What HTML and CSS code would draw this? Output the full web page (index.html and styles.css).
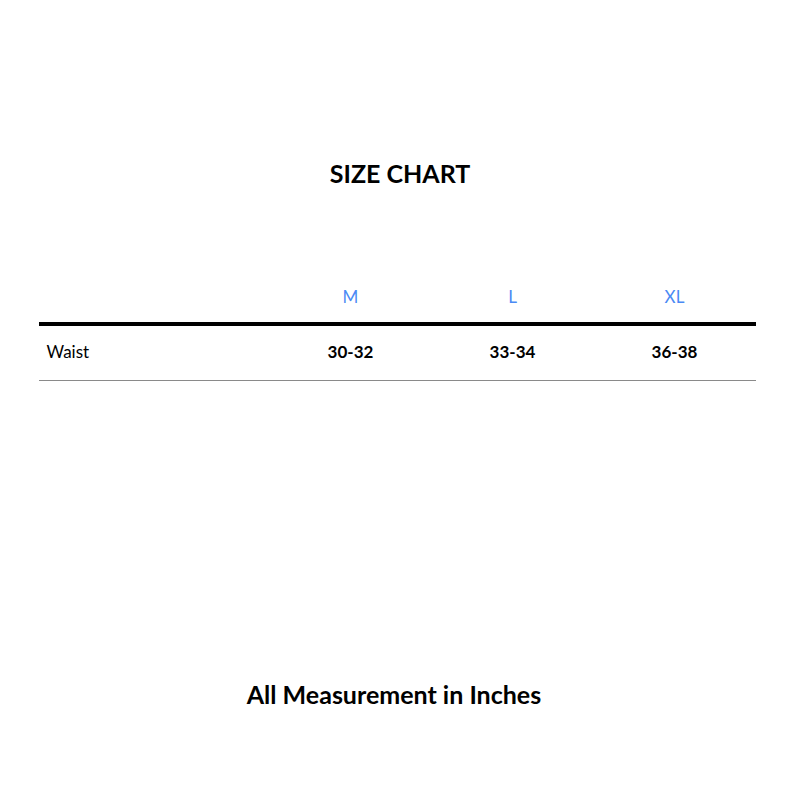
FILE: index.html
```html
<!DOCTYPE html>
<html>
<head>
<meta charset="utf-8">
<link rel="stylesheet" href="styles.css">
</head>
<body>
<div class="page">
  <h1 class="title">SIZE CHART</h1>
  <div class="chart">
    <div class="row head">
      <div class="cell label"></div>
      <div class="cell size">M</div>
      <div class="cell size">L</div>
      <div class="cell size">XL</div>
    </div>
    <div class="row body">
      <div class="cell label">Waist</div>
      <div class="cell val">30-32</div>
      <div class="cell val">33-34</div>
      <div class="cell val">36-38</div>
    </div>
  </div>
  <p class="note">All Measurement in Inches</p>
</div>
</body>
</html>
```
FILE: styles.css
```css
html, body {
  margin: 0;
  padding: 0;
  background: #fff;
}
body {
  font-family: Lato, "Open Sans", "Liberation Sans", sans-serif;
  color: #000;
}
.page {
  width: 800px;
  height: 800px;
  display: flex;
  flex-direction: column;
  align-items: center;
}
.title {
  margin: 155px 0 0;
  font-size: 25px;
  line-height: 36px;
  font-weight: 700;
}
.chart {
  margin-top: 85px;
  width: 717px;
  margin-left: -6px;
}
.row {
  display: grid;
  grid-template-columns: 231px 162px 162px 162px;
  align-items: center;
}
.head {
  height: 37px;
  padding: 2px 0 7px;
  border-bottom: 4px solid #000;
}
.body {
  height: 50px;
  padding-bottom: 4px;
  border-bottom: 1px solid #8a8a8a;
}
.cell {
  font-size: 17px;
}
.label {
  padding-left: 8px;
}
.size {
  text-align: center;
  color: #4a8af4;
}
.val {
  text-align: center;
  font-weight: 700;
}
.note {
  margin: auto 12px 91px 0;
  font-size: 25px;
  line-height: 30px;
  font-weight: 700;
}
```
